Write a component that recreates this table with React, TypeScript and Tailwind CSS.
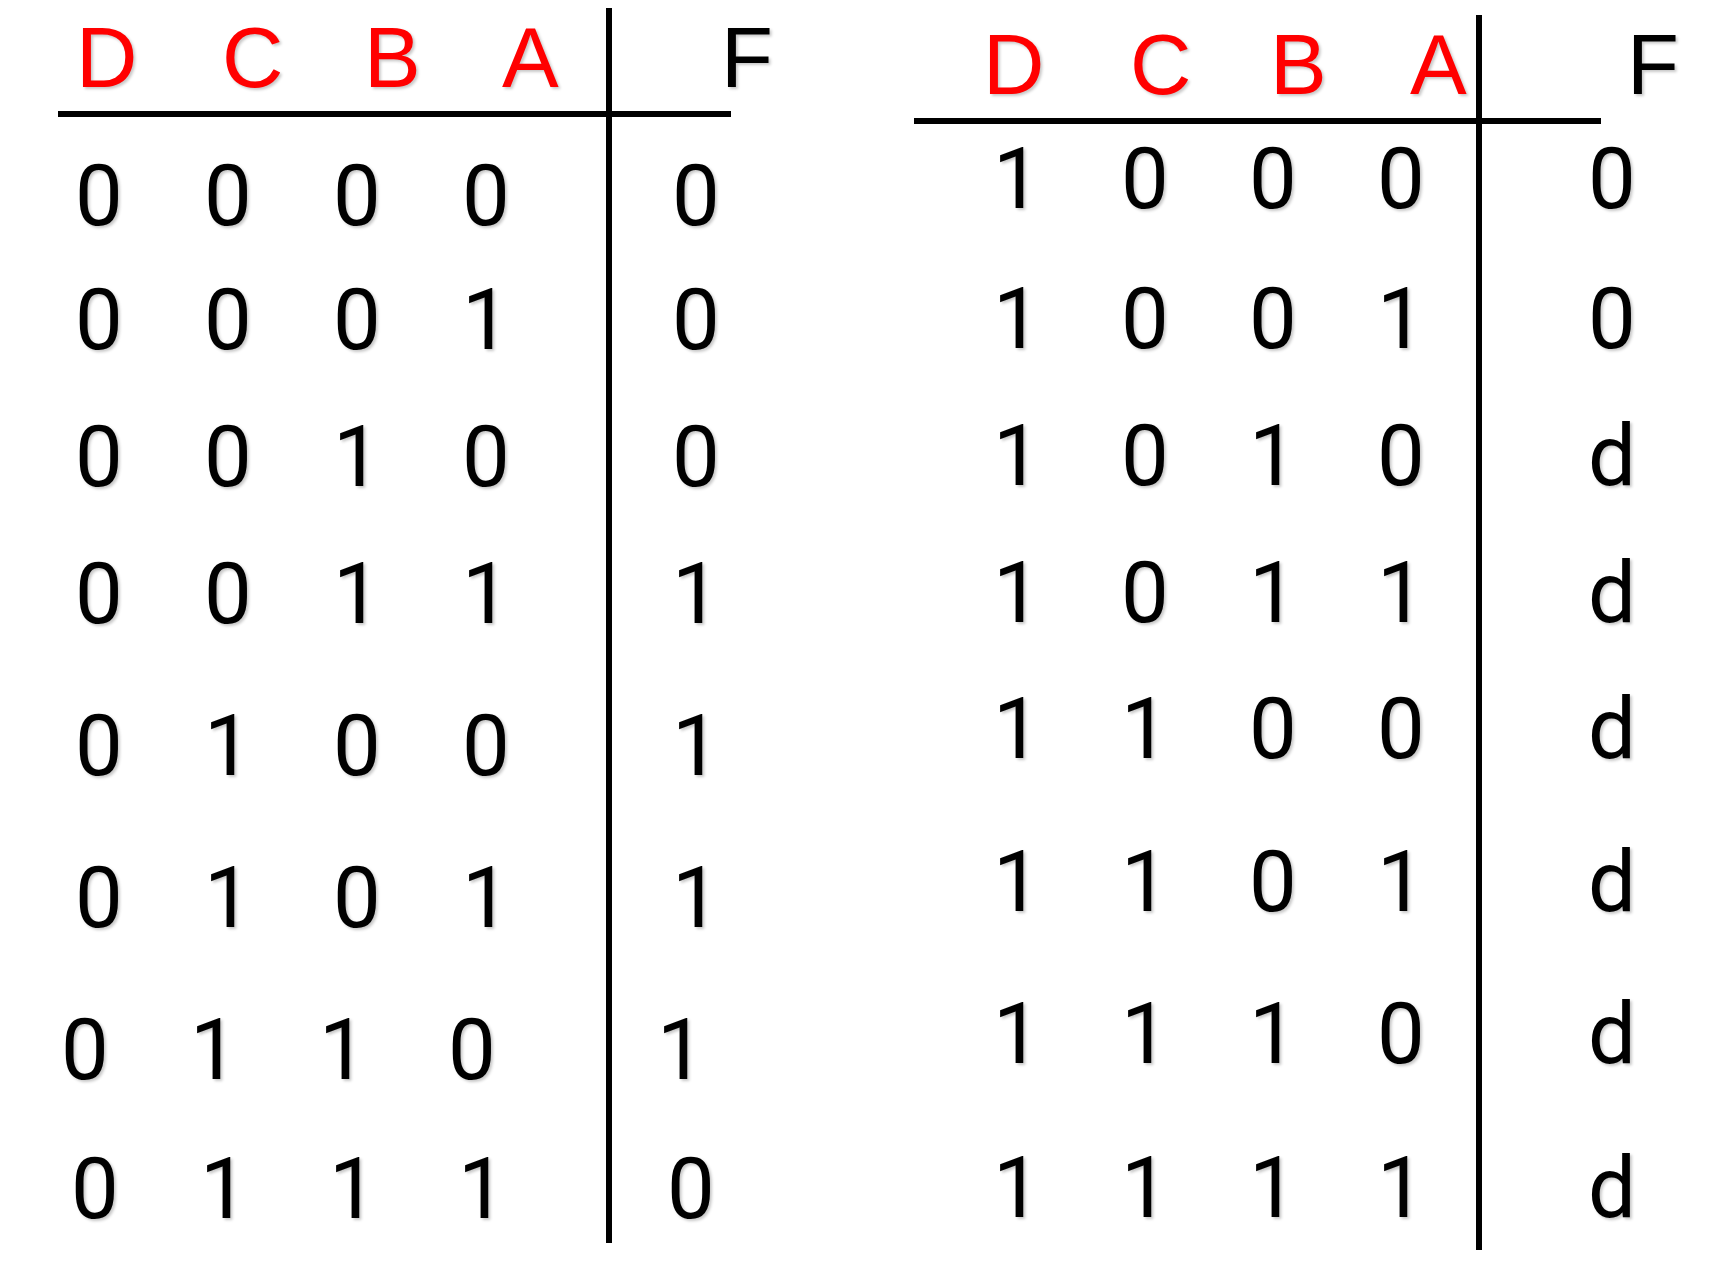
import type { ReactNode } from 'react';

interface Row {
  bits: string[];
  f: string;
  rowClass: string; // height (+ top padding for first row)
  bitsClass: string; // left padding of the input cells
  fClass: string; // left padding of the F cell
}

const headers = ['D', 'C', 'B', 'A'];

const leftRows: Row[] = [
  { bits: ['0', '0', '0', '0'], f: '0', rowClass: 'h-[161px] pt-[37px]', bitsClass: 'pl-[16px]', fClass: 'pl-[59px]' },
  { bits: ['0', '0', '0', '1'], f: '0', rowClass: 'h-[137px]', bitsClass: 'pl-[16px]', fClass: 'pl-[59px]' },
  { bits: ['0', '0', '1', '0'], f: '0', rowClass: 'h-[137px]', bitsClass: 'pl-[16px]', fClass: 'pl-[59px]' },
  { bits: ['0', '0', '1', '1'], f: '1', rowClass: 'h-[152px]', bitsClass: 'pl-[16px]', fClass: 'pl-[59px]' },
  { bits: ['0', '1', '0', '0'], f: '1', rowClass: 'h-[152px]', bitsClass: 'pl-[16px]', fClass: 'pl-[59px]' },
  { bits: ['0', '1', '0', '1'], f: '1', rowClass: 'h-[152px]', bitsClass: 'pl-[16px]', fClass: 'pl-[59px]' },
  { bits: ['0', '1', '1', '0'], f: '1', rowClass: 'h-[139px]', bitsClass: 'pl-[2px]', fClass: 'pl-[44px]' },
  { bits: ['0', '1', '1', '1'], f: '0', rowClass: 'h-[96px]', bitsClass: 'pl-[12px]', fClass: 'pl-[54px]' },
];

const rightRows: Row[] = [
  { bits: ['1', '0', '0', '0'], f: '0', rowClass: 'h-[153px] pt-[13px]', bitsClass: 'pl-[78px]', fClass: 'pl-[105px]' },
  { bits: ['1', '0', '0', '1'], f: '0', rowClass: 'h-[137px]', bitsClass: 'pl-[78px]', fClass: 'pl-[105px]' },
  { bits: ['1', '0', '1', '0'], f: 'd', rowClass: 'h-[137px]', bitsClass: 'pl-[78px]', fClass: 'pl-[105px]' },
  { bits: ['1', '0', '1', '1'], f: 'd', rowClass: 'h-[136px]', bitsClass: 'pl-[78px]', fClass: 'pl-[105px]' },
  { bits: ['1', '1', '0', '0'], f: 'd', rowClass: 'h-[153px]', bitsClass: 'pl-[78px]', fClass: 'pl-[105px]' },
  { bits: ['1', '1', '0', '1'], f: 'd', rowClass: 'h-[152px]', bitsClass: 'pl-[78px]', fClass: 'pl-[105px]' },
  { bits: ['1', '1', '1', '0'], f: 'd', rowClass: 'h-[154px]', bitsClass: 'pl-[78px]', fClass: 'pl-[105px]' },
  { bits: ['1', '1', '1', '1'], f: 'd', rowClass: 'h-[104px]', bitsClass: 'pl-[78px]', fClass: 'pl-[105px]' },
];

const shadow = '[text-shadow:2px_2px_3px_rgba(0,0,0,0.22)]';

function Cell({ children, red, className = '' }: { children: ReactNode; red?: boolean; className?: string }) {
  return (
    <span
      className={`inline-block shrink-0 w-[50px] text-center leading-none ${shadow} ${
        red ? 'text-[#ff0000]' : "text-black font-['Roboto','Liberation_Sans',Arial,sans-serif]"
      } ${className}`}
    >
      {children}
    </span>
  );
}

interface TableProps {
  rows: Row[];
  wrapClass: string;
  inputWidth: string;
  headerMargins: string[];
  bitGap: string;
  fHeaderClass: string;
}

function TruthTable({ rows, wrapClass, inputWidth, headerMargins, bitGap, fHeaderClass }: TableProps) {
  return (
    <div className={`flex flex-col ${wrapClass}`}>
      {/* Header */}
      <div className="flex h-[109px] border-b-[6px] border-black">
        <div className={`flex items-start pt-[7px] border-r-[6px] border-black ${inputWidth}`}>
          {headers.map((h, i) => (
            <Cell key={h} red className={headerMargins[i]}>
              {h}
            </Cell>
          ))}
        </div>
        <div className="w-[119px] shrink-0 pt-[7px] whitespace-nowrap leading-none">
          <span className={`inline-block ${shadow} ${fHeaderClass}`}>F</span>
        </div>
      </div>

      {/* Body */}
      {rows.map((row, i) => (
        <div key={i} className="flex">
          <div className={`flex items-start border-r-[6px] border-black ${inputWidth} ${row.rowClass} ${row.bitsClass} ${bitGap}`}>
            {row.bits.map((b, j) => (
              <Cell key={j}>{b}</Cell>
            ))}
          </div>
          <div className={`flex items-start w-[119px] shrink-0 ${row.rowClass} ${row.fClass}`}>
            <Cell>{row.f}</Cell>
          </div>
        </div>
      ))}
    </div>
  );
}

export default function App() {
  return (
    <div className="w-[1730px] h-[1268px] bg-white overflow-hidden font-['Liberation_Sans',Arial,sans-serif] text-[85px] text-black">
      <div className="flex items-start">
        <TruthTable
          rows={leftRows}
          wrapClass="ml-[58px] mt-[8px]"
          inputWidth="w-[554px]"
          headerMargins={['ml-[18px]', 'ml-[96px]', 'ml-[92px]', 'ml-[88px]']}
          bitGap="gap-[79px]"
          fHeaderClass="ml-[109px]"
        />
        <TruthTable
          rows={rightRows}
          wrapClass="ml-[183px] mt-[15px]"
          inputWidth="w-[568px]"
          headerMargins={['ml-[69px]', 'ml-[97px]', 'ml-[90px]', 'ml-[90px]']}
          bitGap="gap-[78px]"
          fHeaderClass="ml-[145px]"
        />
      </div>
    </div>
  );
}
